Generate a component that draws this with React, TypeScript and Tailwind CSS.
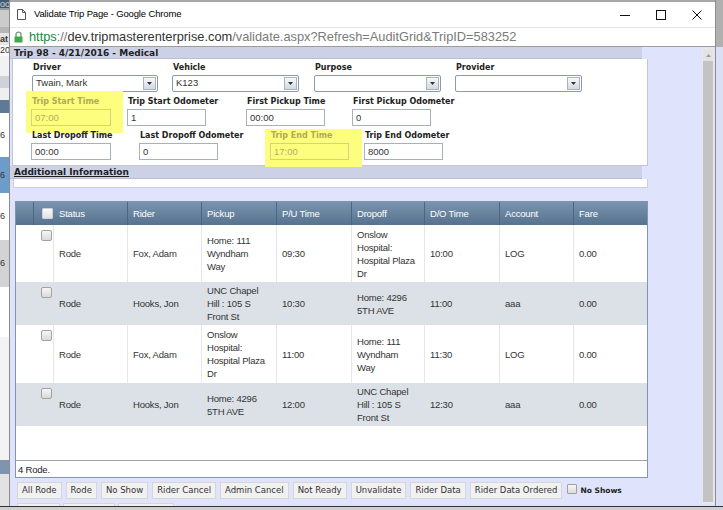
import React from "react";

const sans = "font-['Liberation_Sans',Arial,sans-serif]";
const verd = "font-['DejaVu_Sans',Verdana,sans-serif]";

type Row = {
  rider: string;
  pickup: string[];
  pu: string;
  dropoff: string[];
  dot: string;
  account: string;
  alt: boolean;
  h: string;
};

const rows: Row[] = [
  { rider: "Fox, Adam", pickup: ["Home: 111", "Wyndham", "Way"], pu: "09:30", dropoff: ["Onslow", "Hospital:", "Hospital Plaza", "Dr"], dot: "10:00", account: "LOG", alt: false, h: "h-[57px]" },
  { rider: "Hooks, Jon", pickup: ["UNC Chapel", "Hill : 105 S", "Front St"], pu: "10:30", dropoff: ["Home: 4296", "5TH AVE"], dot: "11:00", account: "aaa", alt: true, h: "h-[43px]" },
  { rider: "Fox, Adam", pickup: ["Onslow", "Hospital:", "Hospital Plaza", "Dr"], pu: "11:00", dropoff: ["Home: 111", "Wyndham", "Way"], dot: "11:30", account: "LOG", alt: false, h: "h-[58px]" },
  { rider: "Hooks, Jon", pickup: ["Home: 4296", "5TH AVE"], pu: "12:00", dropoff: ["UNC Chapel", "Hill : 105 S", "Front St"], dot: "12:30", account: "aaa", alt: true, h: "h-[43px]" },
];

function Box() {
  return <span className="block h-[11px] w-[11px] rounded-[2px] border border-[#a2a2a2] bg-linear-to-b from-[#f6f6f6] to-[#dadada]" />;
}

function Label({ children, hi }: { children: React.ReactNode; hi?: boolean }) {
  return (
    <div className={`${verd} mb-[3px] whitespace-nowrap pl-[1px] text-[8px] font-bold leading-[9px] ${hi ? "text-[#aeab55]" : "text-[#222]"}`}>
      {children}
    </div>
  );
}

function Input({ value, hi, className }: { value: string; hi?: boolean; className: string }) {
  return (
    <div
      className={`${sans} h-[17px] border pl-[3px] text-[9.5px] leading-[15px] ${hi ? "border-[#d3d08a] bg-transparent text-[#b3ae62]" : "border-[#a7b1be] bg-white text-[#333]"} ${className}`}
    >
      {value}
    </div>
  );
}

function Select({ value, className }: { value: string; className: string }) {
  return (
    <div className={`flex h-[17px] items-center rounded-[2px] border border-[#8d9aac] bg-white ${className}`}>
      <span className={`${sans} flex-1 pl-[3px] text-[9.5px] text-[#333]`}>{value}</span>
      <span className="mr-[1px] flex h-[13px] w-[13px] items-center justify-center border border-[#a8b3c1] bg-linear-to-b from-[#f6f8fa] to-[#d3d9e1]">
        <svg width="5" height="3" viewBox="0 0 5 3">
          <path d="M0 0h5L2.5 3z" fill="#333" />
        </svg>
      </span>
    </div>
  );
}

function Btn({ children }: { children: React.ReactNode }) {
  return (
    <div className={`${verd} flex h-[17px] items-center whitespace-nowrap border border-[#d6d6d6] bg-[#f1f1f1] px-[4px] text-[8.5px] text-[#333]`}>
      {children}
    </div>
  );
}

function LeftStrip() {
  return (
    <div className={`${sans} flex h-[506px] w-[9px] shrink-0 flex-col overflow-hidden text-[9px] leading-none text-[#333]`}>
      <div className="h-[8px] bg-[#44586c] text-[#cfd8e0]">oo</div>
      <div className="h-[2px] bg-[#9a9a9a]" />
      <div className="h-[17px] bg-[#cbcbcb]" />
      <div className="h-[6px] bg-[#b5b5b5]" />
      <div className="flex h-[12px] items-center bg-[#e6e6e6] font-bold">at</div>
      <div className="flex h-[11px] items-center bg-[#fafafa]">20</div>
      <div className="h-[20px] bg-[#f2f2f2]" />
      <div className="h-[12px] bg-[#cfd2d8]" />
      <div className="h-[12px] bg-[#efefef]" />
      <div className="h-[13px] bg-[#5e7a96]" />
      <div className="flex h-[44px] items-center bg-white">6</div>
      <div className="flex h-[36px] items-center bg-[#6c9cc9]">6</div>
      <div className="flex h-[47px] items-center bg-white">6</div>
      <div className="flex h-[47px] items-center bg-[#d3d3d3]">6</div>
      <div className="h-[50px] bg-white" />
      <div className="h-[123px] bg-[#f3f3f3]" />
      <div className="h-[14px] bg-[#7f95ad]" />
      <div className="h-[32px] bg-[#e2e2e2]" />
    </div>
  );
}

function TitleBar() {
  return (
    <div className="flex h-[27px] items-center border-t-2 border-[#a8a8a8] bg-white">
      <span className="ml-[7px] mr-[8px] flex">
        <svg width="9" height="11" viewBox="0 0 9 11">
          <path d="M0.5 0.5h5l3 3v7h-8z" fill="white" stroke="#555" />
          <path d="M5.5 0.5v3h3" fill="none" stroke="#555" />
        </svg>
      </span>
      <span className={`${sans} flex-1 text-[9.5px] tracking-[-0.15px] text-black`}>Validate Trip Page - Google Chrome</span>
      <div className="flex">
        <span className="flex h-[24px] w-[36px] items-center justify-center">
          <svg width="10" height="10" viewBox="0 0 10 10">
            <path d="M0 5.5h10" stroke="#111" strokeWidth="1" />
          </svg>
        </span>
        <span className="flex h-[24px] w-[36px] items-center justify-center">
          <svg width="10" height="10" viewBox="0 0 10 10">
            <rect x="0.5" y="0.5" width="9" height="9" fill="none" stroke="#111" strokeWidth="1" />
          </svg>
        </span>
        <span className="flex h-[24px] w-[36px] items-center justify-center">
          <svg width="10" height="10" viewBox="0 0 10 10">
            <path d="M0.5 0.5l9 9M9.5 0.5l-9 9" stroke="#111" strokeWidth="1" />
          </svg>
        </span>
      </div>
    </div>
  );
}

function AddressBar() {
  return (
    <div className="flex h-[20px] items-center border-t border-b border-t-[#e4e4e4] border-b-[#9c9c9c] bg-white">
      <span className="ml-[4px] mr-[6px] flex">
        <svg width="9" height="12" viewBox="0 0 9 12">
          <path d="M2 6V3.6a2.5 2.5 0 0 1 5 0V6" stroke="#7d9a7d" fill="none" strokeWidth="1.4" />
          <rect x="0.5" y="5.5" width="8" height="6" rx="0.6" fill="#3faa48" />
        </svg>
      </span>
      <span className={`${sans} whitespace-nowrap text-[12.8px]`}>
        <span className="text-[#168a3c]">https</span>
        <span className="text-[#7a7a7a]">://</span>
        <span className="text-[#333]">dev.tripmasterenterprise.com</span>
        <span className="text-[#7a7a7a]">/validate.aspx?Refresh=AuditGrid&amp;TripID=583252</span>
      </span>
    </div>
  );
}

function Form() {
  return (
    <div className="ml-[2px] h-[107px] w-[636px] border border-t-0 border-[#c3c7d4] bg-white pl-[19px] pt-[4px]">
      <div className="flex items-start">
        <div className="w-[140px]">
          <Label>Driver</Label>
          <Select value="Twain, Mark" className="w-[126px]" />
        </div>
        <div className="w-[142px]">
          <Label>Vehicle</Label>
          <Select value="K123" className="w-[127px]" />
        </div>
        <div className="w-[141px]">
          <Label>Purpose</Label>
          <Select value="" className="w-[127px]" />
        </div>
        <div>
          <Label>Provider</Label>
          <Select value="" className="w-[127px]" />
        </div>
      </div>
      <div className="-ml-[1px] mt-[5px] flex items-start">
        <div className="w-[96px]">
          <div className="-mb-[7px] -ml-[5px] -mt-[6px] w-[97px] bg-[#fdfd7e] pb-[7px] pl-[5px] pt-[6px]">
            <Label hi>Trip Start Time</Label>
            <Input hi value="07:00" className="w-[80px]" />
          </div>
        </div>
        <div className="w-[119px]">
          <Label>Trip Start Odometer</Label>
          <Input value="1" className="w-[79px]" />
        </div>
        <div className="w-[106px]">
          <Label>First Pickup Time</Label>
          <Input value="00:00" className="w-[79px]" />
        </div>
        <div>
          <Label>First Pickup Odometer</Label>
          <Input value="0" className="w-[79px]" />
        </div>
      </div>
      <div className="-ml-[1px] mt-[5px] flex items-start">
        <div className="w-[108px]">
          <Label>Last Dropoff Time</Label>
          <Input value="00:00" className="w-[80px]" />
        </div>
        <div className="w-[131px]">
          <Label>Last Dropoff Odometer</Label>
          <Input value="0" className="w-[79px]" />
        </div>
        <div className="w-[94px]">
          <div className="-mb-[7px] -ml-[5px] -mt-[2px] w-[97px] bg-[#fdfd7e] pb-[7px] pl-[5px] pt-[2px]">
            <Label hi>Trip End Time</Label>
            <Input hi value="17:00" className="w-[79px]" />
          </div>
        </div>
        <div>
          <Label>Trip End Odometer</Label>
          <Input value="8000" className="w-[79px]" />
        </div>
      </div>
    </div>
  );
}

function Lines({ lines }: { lines: string[] }) {
  return (
    <div>
      {lines.map((l, i) => (
        <div key={i} className="whitespace-nowrap">
          {l}
        </div>
      ))}
    </div>
  );
}

function Grid() {
  const th = "flex items-center border-l border-[#4c6681] pl-[5px]";
  return (
    <div className={`${sans} ml-[5px] w-[633px] border border-[#8495a9] bg-white text-[9.5px] leading-[13px] tracking-[-0.2px] text-[#333]`}>
      <div className="flex h-[23px] bg-linear-to-b from-[#7a94ae] to-[#56728e] text-white">
        <div className="w-[17px]" />
        <div className="flex w-[20px] items-center border-l border-[#4c6681] pl-[8px]">
          <span className="block h-[11px] w-[11px] rounded-[1px] border border-[#c9d2db] bg-linear-to-b from-[#fafafa] to-[#e2e2e2]" />
        </div>
        <div className="flex w-[74px] items-center pl-[6px]">Status</div>
        <div className={`${th} w-[74px]`}>Rider</div>
        <div className={`${th} w-[75px]`}>Pickup</div>
        <div className={`${th} w-[75px]`}>P/U Time</div>
        <div className={`${th} w-[73px]`}>Dropoff</div>
        <div className={`${th} w-[75px]`}>D/O Time</div>
        <div className={`${th} w-[74px]`}>Account</div>
        <div className={`${th} flex-1`}>Fare</div>
      </div>
      {rows.map((r, i) => {
        const td = `flex items-center border-l pl-[5px] ${r.alt ? "border-[#dbe1e7]" : "border-[#e3e8ed]"}`;
        return (
          <div key={i} className={`flex ${r.h} ${r.alt ? "bg-[#dbe1e7]" : "bg-white"}`}>
            <div className="w-[17px]" />
            <div className="w-[20px] pl-[8px] pt-[5px]">
              <Box />
            </div>
            <div className={`${td} w-[74px]`}>Rode</div>
            <div className={`${td} w-[74px]`}>{r.rider}</div>
            <div className={`${td} w-[75px]`}>
              <Lines lines={r.pickup} />
            </div>
            <div className={`${td} w-[75px]`}>{r.pu}</div>
            <div className={`${td} w-[73px]`}>
              <Lines lines={r.dropoff} />
            </div>
            <div className={`${td} w-[75px]`}>{r.dot}</div>
            <div className={`${td} w-[74px]`}>{r.account}</div>
            <div className={`${td} flex-1`}>0.00</div>
          </div>
        );
      })}
      <div className="h-[34px]" />
      <div className="flex h-[17px] items-center border-t border-[#9aa5b3] pl-[2px] text-[#222]">4 Rode.</div>
    </div>
  );
}

function Content() {
  return (
    <div className="flex h-[459px] overflow-hidden bg-[#dfe3fb]">
      <div className="w-[638px] shrink-0">
        <div className={`${verd} h-[12px] w-[632px] border-b border-[#b9bed3] bg-[#ccd1e5] pl-[4px] text-[9px] font-bold leading-[12px] text-[#1e1e1e]`}>
          Trip 98 - 4/21/2016 - Medical
        </div>
        <Form />
        <div className={`${verd} h-[13px] w-[632px] border-b border-[#b9bed3] bg-[#ccd1e5] pl-[4px] text-[9px] font-bold leading-[12px] text-[#1e1e1e] underline`}>
          Additional Information
        </div>
        <div className="ml-[3px] h-[9px] w-[635px] border border-t-0 border-[#cdd0da] bg-white" />
        <div className="h-[13px]" />
        <Grid />
        <div className="ml-[7px] mt-[4px] flex items-center gap-[4px]">
          <Btn>All Rode</Btn>
          <Btn>Rode</Btn>
          <Btn>No Show</Btn>
          <Btn>Rider Cancel</Btn>
          <Btn>Admin Cancel</Btn>
          <Btn>Not Ready</Btn>
          <Btn>Unvalidate</Btn>
          <Btn>Rider Data</Btn>
          <Btn>Rider Data Ordered</Btn>
          <span className="ml-[1px] mt-[2px] block h-[10px] w-[10px] self-start rounded-[1px] border border-[#a0a0a0] bg-linear-to-b from-[#f6f6f6] to-[#dcdcdc]" />
          <span className={`${verd} -ml-[1px] text-[7.5px] font-bold text-[#222]`}>No Shows</span>
        </div>
        <div className="ml-[7px] mt-[4px] flex items-start gap-[3px]">
          <div className={`${verd} flex h-[17px] w-[43px] items-center gap-[2px] border border-[#d6d6d6] bg-[#f1f1f1] px-[6px] text-[8.5px] text-[#333]`}>
            <span className="text-[#2f9d3a]">⬆</span>Save
          </div>
          <div className={`${verd} flex h-[17px] w-[52px] items-center gap-[2px] border border-[#d6d6d6] bg-[#f1f1f1] px-[6px] text-[8.5px] text-[#333]`}>
            <span className="font-bold text-[#d43b3b]">✖</span>Cancel
          </div>
          <Btn>Unvalidate</Btn>
        </div>
      </div>
      <div className="flex-1" />
      <div className="mr-[1px] mt-[1px] flex h-[455px] w-[12px] flex-col border border-[#e9e9e9] bg-[#c3c3c3]">
        <div className="flex h-[12px] items-center justify-center bg-[#e3e3e3]">
          <svg width="5" height="3" viewBox="0 0 5 3">
            <path d="M0 3h5L2.5 0z" fill="#9a9a9a" />
          </svg>
        </div>
      </div>
    </div>
  );
}

export default function App() {
  return (
    <div className="flex h-[510px] w-[723px] flex-col overflow-hidden bg-[#d2d2d2]">
      <div className="flex h-[506px]">
        <LeftStrip />
        <div className="flex w-[707px] shrink-0 flex-col border-x border-[#8c8c8c]">
          <TitleBar />
          <AddressBar />
          <Content />
        </div>
        <div className="flex w-[7px] flex-col">
          <div className="h-[47px] bg-[#b0b0b0]" />
          <div className="flex-1 bg-[#dadff3]" />
        </div>
      </div>
      <div className="h-[4px] border-t border-[#333] bg-[#cfcfcf]" />
    </div>
  );
}
